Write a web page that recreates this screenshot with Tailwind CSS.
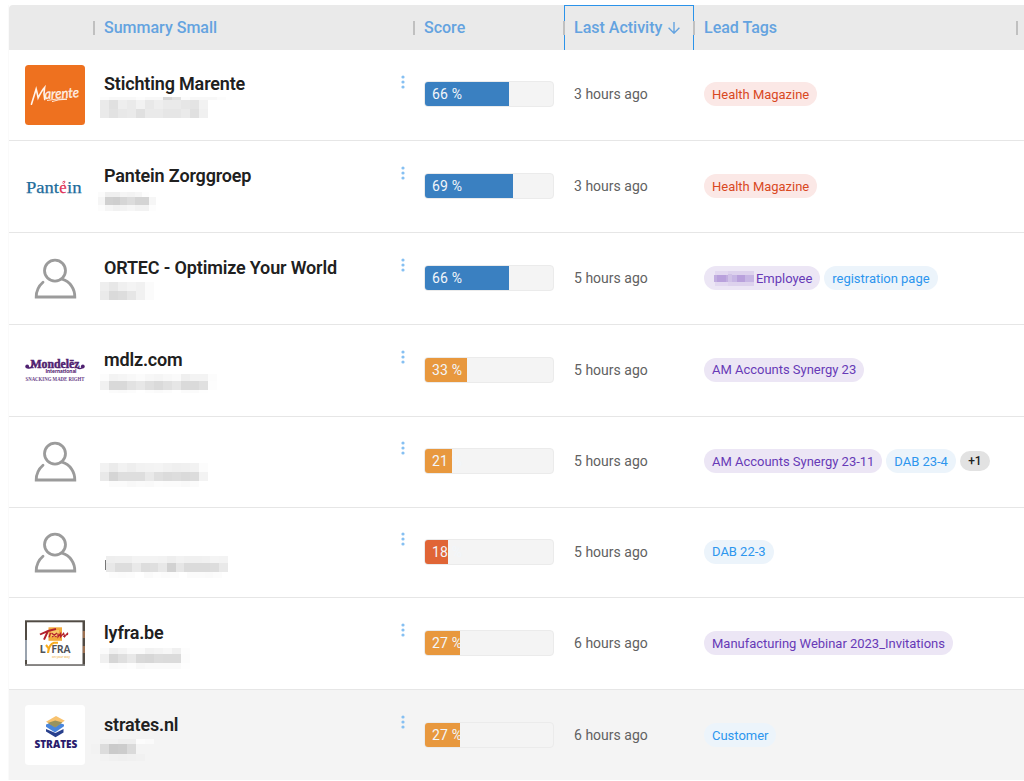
<!DOCTYPE html>
<html lang="en">
<head>
<meta charset="utf-8">
<title>Leads</title>
<script src="https://cdn.jsdelivr.net/npm/@tailwindcss/browser@4"></script>
</head>
<body class="bg-white font-[Roboto,sans-serif] w-[1024px] h-[781px] overflow-hidden pt-[5px] pl-2">
<main class="border-l border-[#fafafa]">
  <header class="grid grid-cols-[85px_320px_150px_130px_330px] h-[45px] bg-[#eaeaea] rounded-tl-[4px] text-[#64a3e0] text-base font-medium">
    <div></div>
    <div class="relative flex items-center pl-2.5"><i class="absolute -left-px top-4 w-0.5 h-3.5 bg-[#c0c0c0]"></i><span>Summary Small</span></div>
    <div class="relative flex items-center pl-2.5"><i class="absolute -left-px top-4 w-0.5 h-3.5 bg-[#c0c0c0]"></i><span>Score</span></div>
    <div class="relative flex items-center pl-[9px] border border-b-0 border-[#2b93ea]"><i class="absolute -left-0.5 top-[15px] w-0.5 h-3.5 bg-[#c0c0c0]"></i><span>Last Activity</span>
      <svg class="ml-1.5 w-3 h-3" viewBox="0 0 12 12" fill="none" stroke="#64a3e0" stroke-width="1.4"><path d="M6 0v11M.6 5.8 6 11.2l5.4-5.4"/></svg>
    </div>
    <div class="relative flex items-center pl-2.5"><i class="absolute -left-px top-4 w-0.5 h-3.5 bg-[#c0c0c0]"></i><span>Lead Tags</span><i class="absolute left-[322px] top-4 w-0.5 h-3.5 bg-[#c0c0c0]"></i></div>
  </header>
  <div id="rows"></div>
</main>
<script>
const person = `<circle cx="30" cy="23" r="10.5"/><path d="M18 34.6C14 38 11.2 43 11.2 49.4H49.8C49.8 41 45 34 37.2 31.6" stroke-linecap="round"/>`;
const logos = {
  person: `<g fill="none" stroke="#9b9b9b" stroke-width="2.8" transform="translate(0 -.4)">${person}</g>`,
  marente: `<rect width="60" height="60" rx="3.5" fill="#ee711f"/><g transform="rotate(-3 30 30)"><path d="M6 38Q9 30 11.5 23Q12.5 28 13 32Q17 25 20 22Q18.5 28 19.5 34" fill="none" stroke="#fff3ea" stroke-width="1.6" stroke-linecap="round"/><text x="19.5" y="33.5" font-family="Lato" font-style="italic" font-size="14" fill="#fff3ea" stroke="#fff3ea" stroke-width=".3" textLength="34.5" lengthAdjust="spacingAndGlyphs">arente</text></g><path d="M22 35.5Q31 33.3 42 34.2Q33 34.3 27 36.6" fill="none" stroke="#fff3ea" stroke-width=".9"/>`,
  pantein: `<g font-family="Liberation Serif" font-size="17" fill="#1d6c9c" stroke="#1d6c9c" stroke-width=".25"><text x="1" y="37.3" textLength="33" lengthAdjust="spacingAndGlyphs">Pant</text><text x="34.2" y="37.3" fill="#e03157" stroke="#e03157" textLength="7.4" lengthAdjust="spacingAndGlyphs">e</text><text x="42" y="37.3" textLength="14.6" lengthAdjust="spacingAndGlyphs">in</text></g><path d="M37.6 26q3-2 2 .8q-1.4 1-2 .2M38.8 29q1.6-.3.5 1" fill="none" stroke="#e03157" stroke-width="1"/>`,
  mondelez: `<g fill="#4f2170" font-weight="bold" font-family="Liberation Serif"><text x="5.5" y="28" font-family="Liberation Serif" stroke="#4f2170" stroke-width=".5" font-size="13" textLength="49" lengthAdjust="spacingAndGlyphs">Mondelēz</text><text x="20.5" y="33" font-family="Lato" font-weight="900" font-size="4.8" textLength="31" lengthAdjust="spacingAndGlyphs">International</text><text x=".5" y="41" font-size="7" textLength="59" lengthAdjust="spacingAndGlyphs" fill="#693e87">SNACKING MADE RIGHT</text><circle cx="2.2" cy="26.5" r="1.9"/><circle cx="57.8" cy="26.5" r="1.9"/></g><path d="M2.5 27.5Q6.5 29.5 8.5 23M52.5 28Q55 29.5 57.5 27.5" fill="none" stroke="#4f2170" stroke-width="1.4"/>`,
  lyfra: `<rect y="7.3" width="60" height="45.5" fill="#514b44"/><path d="M0 27h2v20H0z" fill="#9aa3ae"/><path d="M57.5 18h2.5v7h-2.5zM57.5 33h2.5v7h-2.5z" fill="#9b7051"/><rect y="51.4" width="60" height="1.4" fill="#898989"/><rect x="2" y="9.3" width="55.5" height="41.9" fill="#fff"/><rect x="23.5" y="14.3" width="13.5" height="13.5" fill="#f2a93b"/><rect x="26" y="17" width="8" height="7" fill="#f8c766"/><path d="M15 21.5Q22 17.5 31 16M23 18l-4 8.6" fill="none" stroke="#b3202d" stroke-width="2"/><path d="M25.5 20l-1.5 4.4M26.5 20l5 4M32 20l-5 4M33 20.5v3.3l2.6-3.3v3.3l3-3.5 1 3.3 3.4-3.8M38 23.5l5-2.3" fill="none" stroke="#b3202d" stroke-width="1.3"/><g font-family="Lato" font-weight="900" font-size="11" fill="#51545b"><text x="14.8" y="40">L</text><text x="26.5" y="40" textLength="19" lengthAdjust="spacingAndGlyphs">FRA</text></g><path d="M21 32l3.2 4.2M23 40q1-9 6-10.3h4" fill="none" stroke="#f6ab1d" stroke-width="2.1"/><text x="27" y="45.2" font-family="Lato" font-size="4.2" fill="#efb046" textLength="18" lengthAdjust="spacingAndGlyphs">on your way</text>`,
  strates: `<rect width="60" height="60" rx="3.5" fill="#fff"/><path d="M21 24l9.5 4 8-4v3.4L30.5 32.3 21 26.4z" fill="#283f8c"/><path d="M21 19.5l9-3 9 3v1.8L30 27.4l-9-5.6z" fill="#4a86dd"/><path d="M21 16.8L31 11l8.8 4.8-9.6 6.2z" fill="#f8c26e"/><path d="M22.6 18l7.6-2.6 7.2 2.1-7.2 4.9z" fill="#99935f"/><text x="9.4" y="43" font-family="Open Sans" font-weight="800" font-size="9.6" fill="#2a1d6e" textLength="43" lengthAdjust="spacingAndGlyphs">STRATES</text>`
};
const tone = {
  red: 'bg-[#fbe8e6] text-[#d9481f]',
  purple: 'bg-[#ece6f5] text-[#673ab7]',
  blue: 'bg-[#ecf4fb] text-[#2d96ee]'
};
const fills = { blue: 'bg-[#3a80c1]', amber: 'bg-[#e8983e]', red: 'bg-[#e06536]' };
// mask: bands of [y, height, x, greys in hex pairs]; cw is the width of one grey cell, 9 unless given
const rows = [
  { h:'h-[91px] pt-[14px]', logo:'marente', logoPad:'pt-px', dots:'mt-[11px]', name:'Stichting Marente', score:66, fill:'blue', ago:'3 hours ago', tags:[['red','Health Magazine']],
    mask:[[3,3,100,'fcf8f8f8fcf8f8d8e2fcf8f8f8fc'],[6,9,100,'eae0eeeaf2e8eeeaeae6e4f2'],[15,9,100,'eae2e8eae0eaeae6e6eae0f0']] },
  { h:'h-[92px] pt-[15px]', logo:'pantein', name:'Pantein Zorggroep', score:69, fill:'blue', ago:'3 hours ago', tags:[['red','Health Magazine']], cw:7.3,
    mask:[[6,5,98,'fbefeff5f3f6fdff'],[11,8,98,'f5d0ced6dcd4d4f6'],[19,6,98,'fcf5f1f3f6f2f2fd']] },
  { h:'h-[92px] pt-[15px]', logo:'person', name:'ORTEC - Optimize Your World', score:66, fill:'blue', ago:'5 hours ago', tags:[['purple','Employee',1],['blue','registration page']],
    mask:[[4,9,100,'eee7f0f4f1fb'],[13,9,100,'eadadde6f1fb']] },
  { h:'h-[92px] pt-[15px]', logo:'mondelez', name:'mdlz.com', score:33, fill:'amber', ago:'5 hours ago', tags:[['purple','AM Accounts Synergy 23']], tagText:'pt-0',
    mask:[[4,7,100,'fcf3f5f8fbf7f5f8faeff3f3fc'],[11,9,100,'f1d9d9e2e7dfdae0e6dadae0fd'],[20,3,100,'fffbfafcfffcfafcfffbfbfe']] },
  { h:'h-[91px] pt-[14px]', logo:'person', name:'', score:21, fill:'amber', ago:'5 hours ago', tags:[['purple','AM Accounts Synergy 23-11'],['blue','DAB 23-4']], more:'+1',
    mask:[[2,9,100,'f2ebf2eef2f3f4f1eff0f2fc'],[11,9,100,'e9d5dededee9dfdbdddadcf3'],[20,6,100,'fffbfbf8faf9fcfbfbf9fbff']] },
  { h:'h-[90px] pt-[14px]', logo:'person', name:'', score:18, fill:'red', ago:'5 hours ago', tags:[['blue','DAB 22-3']], tagText:'pt-0', bar:1,
    mask:[[4,7,106,'eeefeff3f3f3f2eef2f0f0f1f4f3'],[11,9,106,'e8dddde9dddfe8d2e6dbdbdbdde9'],[20,6,109,'fcfbfcfffafdfbfcfffbfbfafc']], cw:8.7 },
  { h:'h-[92px] pt-[15px]', logo:'lyfra', name:'lyfra.be', score:27, fill:'amber', ago:'6 hours ago', tags:[['purple','Manufacturing Webinar 2023_Invitations']],
    mask:[[5,6,100,'fbf0f4fafaf2f4f7f0fd'],[11,9,100,'f0d6dfe8d9d7dcdbdbfc'],[20,6,100,'fefafbfdf8fafafafafe']] },
  { h:'h-[90px] pt-[15px]', logo:'strates', name:'strates.nl', score:27, fill:'amber', ago:'6 hours ago', tags:[['blue','Customer']], last:1,
    mask:[[4,5,91,'f4f1f1eeeefcfa'],[9,10,91,'f2dccaccdaf4f4'],[19,7,91,'f4f2f0eff0f1f4']] }
];
const pixels = r => { const w = r.cw || 9; return r.mask.map(([y,h,x,c]) => c.match(/../g).map((v,i) => `<rect x="${x-94+i*w}" y="${y}" width="${w}" height="${h}" fill="#${v+v+v}"/>`).join('')).join('')
  + (r.bar ? '<rect x="11" y="8" width="1" height="10" fill="#777"/>' : ''); };
const veil = `<svg class="w-11 h-4" viewBox="0 0 44 16" shape-rendering="crispEdges"><path fill="#e2d8f0" d="M3 1h13v15H3z"/><path fill="#ddd2ed" d="M16 1h26v15H16z"/><path fill="#c2aee0" d="M2 5h14v7H2z"/><path fill="#b9a1dc" d="M5 5h9v7H5zM25 5h8v7h-8z"/><path fill="#c7b6e4" d="M16 5h9v7h-9zM33 5h9v7h-9z"/><path fill="#d0c2e7" d="M16 4h4v8h-4z"/></svg>`;
document.getElementById('rows').innerHTML = rows.map(r => `
  <section class="grid grid-cols-[85px_320px_150px_130px_330px] items-start ${r.h} ${r.last ? 'bg-[#f4f4f4]' : 'border-b border-[#e6e6e6]'}">
    <div class="pl-4 ${r.logoPad || ''}"><svg class="w-[60px] h-[60px]" viewBox="0 0 60 60">${logos[r.logo]}</svg></div>
    <div class="relative h-[60px] flex justify-between">
      <h3 class="pl-2.5 pt-[7px] text-lg leading-[26px] tracking-[-0.16px] font-semibold text-[#202020]">${r.name}</h3>
      <svg class="${r.dots || 'mt-2.5'} mr-[9px] w-1 h-[14px] shrink-0" viewBox="0 0 4 14" fill="#86c0f2"><circle cx="2" cy="2" r="1.6"/><circle cx="2" cy="7" r="1.6"/><circle cx="2" cy="12" r="1.6"/></svg>
      <svg class="absolute left-0 top-[30px] w-[160px] h-[30px] overflow-visible" viewBox="0 0 160 30" shape-rendering="crispEdges">${pixels(r)}</svg>
    </div>
    <div class="pl-2.5 h-[60px] flex items-center">
      <div class="w-[130px] h-[26px] rounded-[4px] border border-[#ebebeb] bg-[#f4f4f4] overflow-hidden">
        <div class="h-6 pl-[7px] whitespace-nowrap text-sm leading-[25px] tracking-[0.15px] text-[#f2f6fa] ${fills[r.fill]}" style="width:${Math.round(r.score*1.28)}px">${r.score} %</div>
      </div>
    </div>
    <div class="pl-2.5 h-[60px] flex items-center text-sm tracking-[0.02px] text-[#616161]">${r.ago}</div>
    <div class="pl-2.5 h-[60px] flex items-center gap-1 text-[13px] tracking-[-0.02px]">
      ${r.tags.map(([t,s,m]) => `<span class="h-6 px-2 rounded-full flex items-center whitespace-nowrap ${tone[t]}">${m ? veil : ''}<span class="${r.tagText || 'pt-0.5'}">${s}</span></span>`).join('')}
      ${r.more ? `<span class="h-5 w-[30px] rounded-full flex items-center justify-center bg-[#e2e2e2] text-[#222] text-xs font-medium">${r.more}</span>` : ''}
    </div>
  </section>`).join('');
</script>
</body>
</html>
